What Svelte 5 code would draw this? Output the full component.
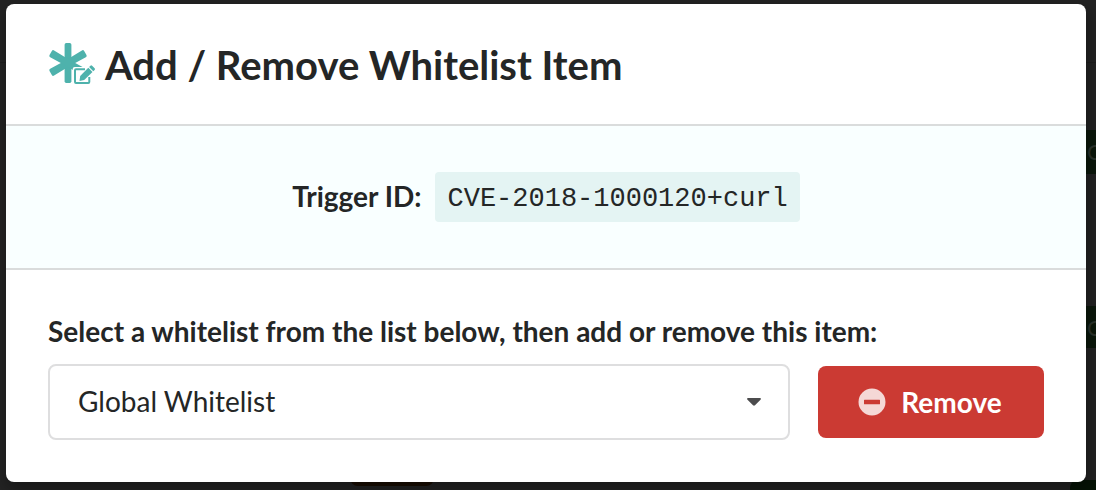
<script>
  let list = $state('Global Whitelist');
</script>

<div class="page">
  <div class="behind" aria-hidden="true">
    <span class="rule"></span>
    <span class="tag first">C</span>
    <span class="tag second">C</span>
    <span class="pill brown"></span>
    <span class="pill green"></span>
  </div>

  <div class="modal" role="dialog" aria-labelledby="title">
    <header>
      <svg class="mark" width="48" height="44" viewBox="0 0 48 44" aria-hidden="true">
        <defs>
          <path id="bar" d="M17.700 1h4.600q1.700 0 1.600 1.700L23.400 21l.5 18.300q.1 1.700-1.600 1.700h-4.600q-1.700 0-1.600-1.700L16.600 21l-.5-18.300Q16 1 17.700 1z" />
        </defs>
        <g fill="#4eb2ac">
          <rect x="16.600" y="1" width="6.800" height="40" rx="1.700" />
          <use href="#bar" transform="rotate(60 20 21)" />
          <use href="#bar" transform="rotate(-60 20 21)" />
        </g>
        <rect x="24.700" y="25" width="18.900" height="19" rx="2" fill="#fff" />
        <path d="M32.500 35.500l.5-4 8.500-8.500q1.500-1 3 0l2.500 2.500" fill="#fff" stroke="#fff" stroke-width="2" />
        <path d="M37 27.300H28a1 1 0 0 0-1 1V40a1 1 0 0 0 1 1h12.300a1 1 0 0 0 1-1v-5" fill="none" stroke="#4eb2ac" stroke-width="2" />
        <path d="M40.300 25.800l4.200 4.200-8.300 8-4.700 1 .7-5z" fill="#4eb2ac" />
        <path d="M41.100 25l1.300-1.300a1.200 1.200 0 0 1 1.700 0l2.500 2.500a1.200 1.200 0 0 1 0 1.700l-1.300 1.300z" fill="#4eb2ac" />
      </svg>
      <h1 id="title">Add / Remove Whitelist Item</h1>
    </header>

    <section class="trigger">
      <span class="name">Trigger ID:</span>
      <code>CVE-2018-1000120+curl</code>
    </section>

    <section class="choose">
      <label for="whitelist">Select a whitelist from the list below, then add or remove this item:</label>
      <div class="row">
        <div class="dropdown">
          <select id="whitelist" bind:value={list}>
            <option>Global Whitelist</option>
          </select>
          <svg class="caret" width="14" height="8" viewBox="0 0 14 8" aria-hidden="true">
            <path d="M1 0h12q1.500.5.5 1.700L8 7.300q-1 .9-2 0L.5 1.700Q-.5.5 1 0z" fill="#4c4c4d" />
          </svg>
        </div>
        <button type="button">
          <svg width="28" height="28" viewBox="0 0 28 28" aria-hidden="true">
            <path fill-rule="evenodd" d="M14 .5a13.500 13.500 0 1 0 0 27 13.500 13.500 0 0 0 0-27zM6.500 11.700h15a.5.5 0 0 1 .5.500v3.600a.5.5 0 0 1-.5.500h-15a.5.5 0 0 1-.5-.5v-3.600a.5.5 0 0 1 .5-.5z" fill="#f5d8d6" />
          </svg>
          Remove
        </button>
      </div>
    </section>
  </div>
</div>

<style>
  :global(body) {
    background: #232323;
  }

  .page {
    position: relative;
    box-sizing: border-box;
    min-height: 100vh;
    padding: 4px 10px 8px 6px;
    overflow: hidden;
    color: #242626;
    font-family: Lato, "Liberation Sans", sans-serif;
    font-size: 28px;
    line-height: 38px;
  }

  .behind span {
    position: absolute;
  }

  .rule {
    top: 62px;
    left: 0;
    right: 0;
    height: 1px;
    background: #1d1d1d;
  }

  .tag {
    right: 0;
    width: 10px;
    height: 44px;
    padding-left: 1px;
    box-sizing: border-box;
    overflow: hidden;
    background: #0b180b;
    color: #2c342c;
    font-size: 22px;
    line-height: 44px;
  }

  .first {
    top: 130px;
  }

  .second {
    top: 306px;
    height: 42px;
  }

  .pill {
    bottom: 4px;
    height: 20px;
    border-radius: 8px;
  }

  .brown {
    left: 350px;
    width: 84px;
    background: #190d02;
  }

  .green {
    right: 0;
    bottom: 0;
    width: 26px;
    height: 10px;
    border-radius: 8px 0 0 0;
    background: #051305;
  }

  .modal {
    position: relative;
    overflow: hidden;
    border-radius: 8px;
    background: #fff;
    box-shadow: 2px 6px 14px 2px rgba(0, 0, 0, 0.3);
  }

  header {
    display: flex;
    align-items: center;
    gap: 9px;
    padding: 36px 42px;
    border-bottom: 2px solid #dadcdc;
  }

  .mark {
    flex: none;
  }

  h1 {
    margin: 0;
    padding-top: 2px;
    font-size: 40px;
    font-weight: 700;
    line-height: 46px;
  }

  .trigger {
    display: flex;
    align-items: center;
    justify-content: center;
    gap: 14px;
    padding: 46px 42px;
    border-bottom: 2px solid #dadcdc;
    background: #f9ffff;
  }

  .name {
    padding-bottom: 2px;
    font-weight: 700;
  }

  code {
    padding: 8px 12px 4px;
    border-radius: 4px;
    background: #e4f4f3;
    font-family: "Liberation Mono", monospace;
    font-size: 27px;
    line-height: 38px;
  }

  .choose {
    padding: 42px;
  }

  label {
    display: block;
    margin-bottom: 14px;
    font-weight: 700;
  }

  .row {
    display: flex;
    align-items: center;
    gap: 28px;
  }

  .dropdown {
    position: relative;
    flex: 1;
    display: flex;
  }

  select {
    width: 100%;
    height: 76px;
    padding: 0 56px 2px 28px;
    border: 2px solid #dededf;
    border-radius: 8px;
    appearance: none;
    background: #fff;
    color: #242626;
    font: inherit;
  }

  .caret {
    position: absolute;
    top: 34px;
    right: 29px;
    pointer-events: none;
  }

  button {
    display: flex;
    align-items: center;
    justify-content: center;
    gap: 15px;
    width: 226px;
    height: 72px;
    padding: 0 2px 0 0;
    border: 0;
    border-radius: 8px;
    background: #cb3a33;
    color: #fff;
    font: inherit;
    font-weight: 700;
  }
</style>
